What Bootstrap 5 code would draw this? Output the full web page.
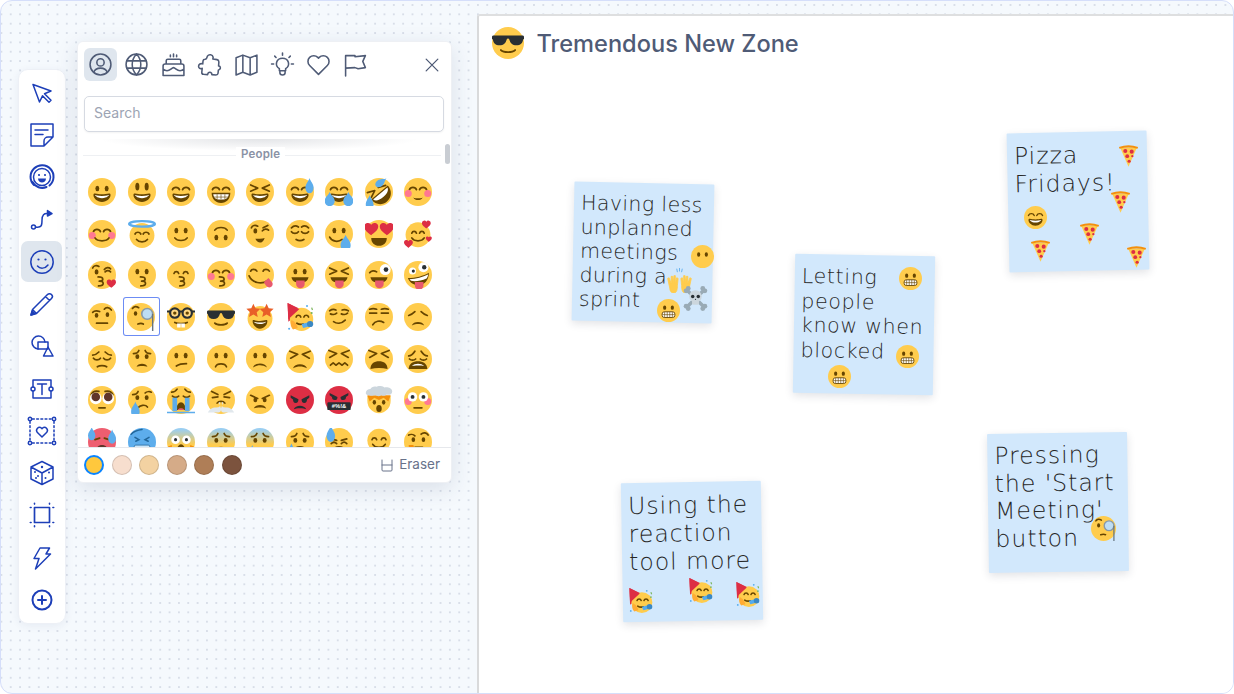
<!DOCTYPE html>
<html lang="en">
<head>
<meta charset="utf-8">
<title>Tremendous New Zone</title>
<link href="https://cdn.jsdelivr.net/npm/bootstrap@5.3.0/dist/css/bootstrap.min.css" rel="stylesheet">
<style>
body{background:#fff;font-family:Inter,"Liberation Sans",sans-serif;overflow:hidden}
.frame{height:694px;border:1px solid #d5defa;border-radius:12px;overflow:hidden;background-color:#f5f9fd;background-image:radial-gradient(circle,#d8dee8 .9px,transparent 1.3px);background-size:9.35px 9.35px;background-position:-4.3px -.7px;position:relative}
.leftcol{width:476px;flex:none;padding:68px 0 0 16.5px}
.toolrail{width:48px;height:555px;background:#fff;border:1px solid #edf0f6;border-radius:10px;box-shadow:0 2px 8px rgba(40,60,110,.07);padding:2px 0 0;gap:1.3px}
.toolbtn{height:41px;width:41px;border:0;border-radius:7px;padding:0;color:#1d3fb8;--bs-btn-color:#1d3fb8}
.toolbtn.on{background:#dfe6ee}
.toolbtn svg{width:24px;height:24px;overflow:visible}
.ico{fill:none;stroke:currentColor;stroke-width:1.5;stroke-linecap:round;stroke-linejoin:round}
.picker{position:absolute;left:76px;top:40px;width:375px;height:442px;background:#fff;border:1px solid #eef0f4;border-radius:6px;box-shadow:0 6px 22px rgba(40,55,90,.13);z-index:5}
.tabrow{padding:6px 6px 0;gap:3.4px;height:39px}
.tabbtn{width:33px;height:33px;padding:0;border:0;border-radius:6px;color:#4f5b76}
.tabbtn.on{background:#dfe6ee}
.tabbtn svg{width:25px;height:25px}
.closebtn{margin-left:auto;margin-right:-3px;color:#4f5b76}
.closebtn svg{width:20px;height:20px}
.srch{margin:15px 6px 0;width:360px;height:36px;border:1px solid #d6dae2;border-radius:5px;font-size:14px;padding:0 8px 4px 9px;box-shadow:0 1px 2px rgba(0,0,0,.05);font-family:Inter,sans-serif}
.srch::placeholder{color:#9ca4b3}
.scroller{height:315px;overflow:hidden;position:relative;flex:none}
.scroller::before{content:"";position:absolute;left:20px;right:30px;top:7px;height:12px;background:radial-gradient(ellipse at 50% 0,rgba(60,70,90,.14),transparent 70%)}
.thumb{position:absolute;left:367px;top:12px;width:5px;height:20px;border-radius:3px;background:#c9cdd3}
.grouphead{position:absolute;left:5px;width:358px;top:23px;height:1px;background:#eef0f3}
.grouplabel{position:absolute;left:158px;top:15px;padding:0 5px;background:#fff;font-size:11.5px;font-weight:600;color:#8a92a5;line-height:14px;letter-spacing:.2px}
.emogrid{position:absolute;left:4.6px;top:39.4px;display:grid;grid-template-columns:repeat(9,39.5px);grid-auto-rows:41.6px}
.cell{display:flex;align-items:center;justify-content:center}
.cell svg{width:28px;height:28px}
.cell.sel{box-shadow:inset 0 0 0 1px #6c8cf4;border-radius:3px;margin:.5px 1.5px 1.5px .5px;padding-top:1px}
.footbar{height:35px;border-top:1px solid #e6e8ec;padding:0 11px 0 6px;gap:7.5px;flex:none}
.swatch{width:20px;height:20px;border-radius:50%;border:1px solid rgba(0,0,0,.14);flex:none}
.swatch.cur{border:2px solid #0a84ff}
.sw0{background:#ffc83d}.sw1{background:#f7dece}.sw2{background:#f3d2a2}.sw3{background:#d5ab88}.sw4{background:#af7e57}.sw5{background:#7c533e}
.eraser{margin-left:auto;font-size:13.5px;color:#68728a;gap:5px;margin-top:-1px}
.eraser svg{width:14px;height:14px}
.stage{position:relative;flex:1;margin-top:13px;background:#fff;border-top:2px solid #dedfe0;border-left:2px solid #d9dadb;border-top-left-radius:3px}
.zonehead{padding:11px 0 0 13px;gap:12.5px}
.zonehead svg{width:32px;height:32px}
.zonehead h1{font-size:23.6px;font-weight:500;color:#4f5b76;margin:0;line-height:31px}
.note{position:absolute;width:140px;height:139px;margin-left:1px;background:#d2e8fc;box-shadow:0 3px 8px rgba(30,40,60,.13);border-radius:1px;padding:9px 7px;color:#262626;font-family:"DejaVu Sans","Liberation Sans",sans-serif;font-weight:200;white-space:nowrap}
.note1{left:93px;top:167px;font-size:20.5px;line-height:24px;letter-spacing:.4px;transform:rotate(1.2deg)}
.note2{left:314px;top:239px;padding-top:10px;font-size:20.5px;line-height:24.5px;letter-spacing:.7px;transform:rotate(1deg)}
.note3{left:528px;top:116px;font-size:23.5px;line-height:28px;letter-spacing:1px;transform:rotate(-1.2deg)}
.note4{left:508px;top:417px;font-size:23.5px;line-height:27.5px;letter-spacing:1px;transform:rotate(-.8deg)}
.note5{left:142px;top:466px;font-size:23.5px;line-height:28px;letter-spacing:1px;transform:rotate(-1deg)}
.pin{position:absolute;width:23px;height:23px;margin-left:1px;z-index:2}
.pin.big{width:25px;height:25px}
#p1{left:211px;top:228.5px}#p2{left:186.5px;top:251.5px}#p3{left:202.5px;top:269.5px}#p4{left:176.5px;top:282.5px}
#p5{left:419px;top:251px}#p6{left:415.5px;top:328.5px}#p7{left:348px;top:348.5px}
#p8{left:637px;top:128px}#p9{left:628.5px;top:173.5px}#p10{left:544px;top:190px}#p11{left:598px;top:205.5px}#p12{left:548.5px;top:223px}#p13{left:644.5px;top:229px}
#p14{left:148px;top:572px}#p15{left:208px;top:562px}#p16{left:255px;top:565.5px}#p17{left:611px;top:500px}
.sprite{position:absolute;width:0;height:0;overflow:hidden}
.sk{fill:none;stroke:#664500;stroke-width:2.2;stroke-linecap:round;stroke-linejoin:round}
.dk{fill:#664500}
.bl{fill:#FF7892}
.dr{fill:#5DADEC}
.wh{fill:#fff}
.rd{fill:#DD2E44}
.tn{fill:#E8596E}
</style>
</head>
<body>
<svg class="sprite" xmlns="http://www.w3.org/2000/svg">
<defs>
<linearGradient id="gb" x1="0" y1="0" x2="0" y2="1"><stop offset="0.05" stop-color="#9ACEF1"/><stop offset="0.6" stop-color="#FFCC4D"/></linearGradient>
<circle id="fc" cx="18" cy="18" r="18" fill="#FFCC4D"/>
<g id="ov" class="dk"><ellipse cx="12" cy="13.5" rx="2.5" ry="3.5"/><ellipse cx="24" cy="13.5" rx="2.5" ry="3.5"/></g>
<g id="ot"><path class="dk" d="M18 21c-3.6 0-6-.4-9-1-.7-.1-2 0-2 2 0 4 4.6 9 11 9s11-5 11-9c0-2-1.3-2.1-2-2-3 .6-5.4 1-9 1z"/><path class="wh" d="M9 22s3 1 9 1 9-1 9-1-2 4-9 4-9-4-9-4z"/></g>
<path id="hp" class="sk" d="M7 15c1.500-4 7.500-4 9 0M20 15c1.500-4 7.500-4 9 0"/>
<path id="sl" class="sk" d="M10 23c3 4.500 13 4.500 16 0"/>
<g id="bs"><circle class="bl" cx="5.500" cy="20" r="4.500"/><circle class="bl" cx="30.500" cy="20" r="4.500"/></g>
<path id="kis" class="sk" d="M16 20.500c4 0 6 1 6 3s-3 2.500-4.500 2.500c2.500 0 5 1 5 3s-3 3-6 3"/>
<path id="xe" class="sk" d="M6 9l9 4-9 4M30 9l-9 4 9 4"/>
<path id="ton" class="tn" d="M13 25h11v4.500a5.500 5.500 0 0 1-11 0z"/>
<path id="hrt" class="rd" d="M6 3.500a3.200 3.200 0 0 0-6 1.500c0 3.500 4 5.500 6 7.500 2-2 6-4 6-7.500a3.200 3.200 0 0 0-6-1.500z"/>
<path id="dp" class="dr" d="M5 0C4 3 0 5 0 9a5 5 0 0 0 10 0C10 5 6 3 5 0z"/>
<path id="sdm" class="sk" d="M11 28c2-5 12-5 14 0"/>
<path id="wor" class="sk" d="M7 11c2 0 6-1 7-4M29 11c-2 0-6-1-7-4"/>
<g id="ge"><rect x="8" y="20" width="20" height="9" rx="3.500" fill="#fff" stroke="#664500" stroke-width="1.400"/><path d="M8.500 24.500h19M12 20v9M16 20v9M20 20v9M24 20v9" fill="none" stroke="#664500" stroke-width="1"/></g>
<g id="mono"><path class="sk" d="M7 7c2-3 5-3 8-1"/><ellipse class="dk" cx="11" cy="13.500" rx="2.200" ry="3"/><path class="sk" d="M14 27c3-1 5-1 7 0"/><circle cx="26" cy="14" r="7" fill="#BDDDF4" stroke="#8899A6" stroke-width="2"/><path d="M33 14v22" stroke="#66757F" stroke-width="1.800"/></g>
<g id="part"><path class="rd" d="M2 0l19 9L3 24z"/><circle cx="20" cy="21" r="15" fill="#FFCC4D"/><path class="rd" d="M2 0l15 8L3 21z"/><path class="sk" d="M13 18c1-3 5-3 6 0M23 18c1-3 5-3 6 0" stroke-width="1.800"/><path class="sk" d="M14 26c3 2 5 2 8 1"/><path d="M20 27l12-3 2 5-12 3z" fill="#55ACEE"/><circle cx="31" cy="27" r="4" fill="#3B88C3"/><path d="M7 22c3 1 7 5 8 10l-6 2c-3-3-4-8-2-12z" fill="#FFAC33"/><circle cx="27" cy="4" r="1.300" fill="#55ACEE"/><circle cx="33" cy="13" r="1.300" fill="#77B255"/><path d="M33 6l1 3" stroke="#77B255" stroke-width="1.500"/><circle cx="4" cy="33" r="1.300" fill="#55ACEE"/></g>
<g id="piz"><path d="M5 6h26L18 35.500z" fill="#FFCC4D"/><path d="M3 4.500Q18 -.5 33 4.500l-1 3Q18 3.500 4 7.500z" fill="#F4900C"/><circle class="rd" cx="13" cy="11" r="3.200"/><circle class="rd" cx="23" cy="12" r="3.200"/><circle class="rd" cx="16" cy="19" r="3"/><circle class="rd" cx="19" cy="27" r="2.500"/><circle class="rd" cx="24" cy="19" r="1.800"/></g>
</defs>
<symbol id="a1" viewBox="0 0 36 36"><use href="#fc"/><use href="#ov"/><use href="#ot"/></symbol>
<symbol id="a2" viewBox="0 0 36 36"><use href="#fc"/><ellipse class="dk" cx="12" cy="11" rx="2.600" ry="5"/><ellipse class="dk" cx="24" cy="11" rx="2.600" ry="5"/><use href="#ot"/></symbol>
<symbol id="a3" viewBox="0 0 36 36"><use href="#fc"/><use href="#hp"/><use href="#ot"/></symbol>
<symbol id="a4" viewBox="0 0 36 36"><use href="#fc"/><use href="#hp"/><path class="dk" d="M6 19h24c0 8-5 13-12 13S6 27 6 19z"/><path class="wh" d="M8 21h20c-.5 5-4 7-10 7s-9.500-2-10-7z"/><path d="M8 24.500h20M13 21v6.500M18 21v7M23 21v6.500" stroke="#664500" stroke-width=".8" fill="none"/></symbol>
<symbol id="a5" viewBox="0 0 36 36"><use href="#fc"/><use href="#xe"/><use href="#ot"/></symbol>
<symbol id="a6" viewBox="0 0 36 36"><use href="#fc"/><use href="#hp"/><use href="#ot"/><use href="#dp" transform="translate(25 0) scale(1.050 1.400)"/></symbol>
<symbol id="a7" viewBox="0 0 36 36"><use href="#fc"/><use href="#hp"/><use href="#ot"/><use href="#dp" transform="translate(-.5 18) scale(1.300)"/><use href="#dp" transform="translate(23.500 18) scale(1.300)"/></symbol>
<symbol id="a8" viewBox="0 0 36 36"><use href="#fc"/><g transform="rotate(-40 18 18)"><use href="#xe"/><path class="dk" d="M4 19h28c0 9-6 15-14 15S4 28 4 19z"/><path class="wh" d="M6 20.500h24c-1 4-5 6-12 6s-11-2-12-6z"/></g><use href="#dp" transform="translate(25 -3) rotate(55) scale(.9 1.200)"/><use href="#dp" transform="translate(1 22) scale(1 1.350)"/></symbol>
<symbol id="a9" viewBox="0 0 36 36"><use href="#fc"/><use href="#hp"/><use href="#bs"/><path class="dk" d="M12 25c3 1.500 9 1.500 12 0-2 4.500-10 4.500-12 0z"/></symbol>
<symbol id="b1" viewBox="0 0 36 36"><use href="#fc"/><use href="#hp"/><use href="#bs"/><path class="sk" d="M9 23c3 5 15 5 18 0"/></symbol>
<symbol id="b2" viewBox="0 0 36 36"><circle cx="18" cy="20" r="16" fill="#FFCC4D"/><path class="sk" d="M9 18c1.500-3 6-3 7.500 0M19.500 18c1.500-3 6-3 7.500 0M11 25c3 4 11 4 14 0" stroke-width="1.800"/><ellipse cx="18" cy="5" rx="16.500" ry="3.500" fill="none" stroke="#5DADEC" stroke-width="3"/></symbol>
<symbol id="b3" viewBox="0 0 36 36"><use href="#fc"/><use href="#ov"/><use href="#sl"/></symbol>
<symbol id="b4" viewBox="0 0 36 36"><use href="#fc"/><g transform="rotate(180 18 18)"><use href="#ov"/><use href="#sl"/></g></symbol>
<symbol id="b5" viewBox="0 0 36 36"><use href="#fc"/><path class="sk" d="M7 10c1-3 5-4 8-2M21 14c2-3 6-3 8-1"/><path class="sk" d="M22 10l6-3"/><ellipse class="dk" cx="12" cy="14" rx="2.500" ry="3.500"/><path class="dk" d="M12 24c3 0 9 0 12-1-1 4-4 6-6 6s-5-2-6-5z"/></symbol>
<symbol id="b6" viewBox="0 0 36 36"><use href="#fc"/><path class="sk" d="M7 10c3-3 6-3 9-1M20 9c3-2 6-2 9 1M7 15c2 3 7 3 9 0M20 15c2 3 7 3 9 0M13 25c3 2 7 2 10 0"/></symbol>
<symbol id="b7" viewBox="0 0 36 36"><use href="#fc"/><use href="#ov"/><path class="sk" d="M6 22c3 6 11 7 16 3"/><use href="#dp" transform="translate(20 19) scale(1.300 1.500)"/></symbol>
<symbol id="b8" viewBox="0 0 36 36"><use href="#fc"/><path class="dk" d="M8 23h20c0 6-4 10-10 10S8 29 8 23z"/><use href="#hrt" transform="translate(-1 1) scale(1.500)"/><use href="#hrt" transform="translate(19 1) scale(1.500)"/></symbol>
<symbol id="b9" viewBox="0 0 36 36"><circle cx="18" cy="19" r="16" fill="#FFCC4D"/><path class="sk" d="M10 17c1-3 5-3 6 0M20 17c1-3 5-3 6 0M10 23c3 5 13 5 16 0"/><use href="#hrt" transform="translate(23 -1) scale(.95)"/><use href="#hrt" transform="translate(0 24) scale(.95)"/><use href="#hrt" transform="translate(28 20) scale(.65)"/></symbol>
<symbol id="c1" viewBox="0 0 36 36"><use href="#fc"/><path class="sk" d="M6 9c1-3 5-4 8-2M21 11c2-3 6-3 8-1M22 14c2-2 5-2 7 0"/><ellipse class="dk" cx="11" cy="14" rx="2.500" ry="3.500"/><use href="#kis" transform="translate(-3 0)"/><use href="#hrt" transform="translate(24 22) scale(1)"/></symbol>
<symbol id="c2" viewBox="0 0 36 36"><use href="#fc"/><use href="#ov"/><use href="#kis"/></symbol>
<symbol id="c3" viewBox="0 0 36 36"><use href="#fc"/><path class="sk" d="M9 16c1-3 5-3 6 0M21 16c1-3 5-3 6 0"/><use href="#kis"/></symbol>
<symbol id="c4" viewBox="0 0 36 36"><use href="#fc"/><use href="#hp"/><use href="#bs"/><use href="#kis"/></symbol>
<symbol id="c5" viewBox="0 0 36 36"><use href="#fc"/><path class="sk" d="M6 13c1-3 6-3 8 0M22 13c1-3 6-3 8 0M4 19c4 9 16 12 24 6"/><path class="tn" d="M23 27l6-5 5 6c1 3-1 6-4 6s-5-3-7-7z"/></symbol>
<symbol id="c6" viewBox="0 0 36 36"><use href="#fc"/><use href="#ov"/><path class="dk" d="M7 21h22c-1 5-5 7-11 7s-10-2-11-7z"/><use href="#ton"/></symbol>
<symbol id="c7" viewBox="0 0 36 36"><use href="#fc"/><use href="#xe"/><path class="dk" d="M7 21h22c-1 5-5 7-11 7s-10-2-11-7z"/><use href="#ton"/></symbol>
<symbol id="c8" viewBox="0 0 36 36"><use href="#fc"/><path class="sk" d="M6 15c2-3 6-3 9-1"/><circle class="wh" cx="26" cy="11" r="7"/><circle cx="27" cy="11" r="3" fill="#292F33"/><path class="dk" d="M7 21h22c-1 5-5 7-11 7s-10-2-11-7z"/><use href="#ton"/></symbol>
<symbol id="c9" viewBox="0 0 36 36"><use href="#fc"/><circle class="wh" cx="11" cy="13" r="4.500"/><circle cx="12" cy="13" r="2" fill="#292F33"/><circle class="wh" cx="25" cy="8" r="6.500"/><circle cx="26" cy="8" r="2.800" fill="#292F33"/><path class="dk" d="M5 22c10 0 20-3 27-7 0 10-6 16-14 16-7 0-11-4-13-9z"/><path class="wh" d="M7 23.500c9 0 17-3 24-6-.5 3-1 4-2 5-7 3-14 4-20 3z"/><use href="#ton" transform="translate(1 2)"/></symbol>
<symbol id="d1" viewBox="0 0 36 36"><use href="#fc"/><path class="sk" d="M6 12c2-2 6-2 9-1M21 8c2-3 6-3 9 1"/><ellipse class="dk" cx="11" cy="16" rx="2.300" ry="3"/><ellipse class="dk" cx="25" cy="15" rx="2.300" ry="3"/><path class="sk" d="M11 26h14"/></symbol>
<symbol id="d2" viewBox="0 0 36 36"><use href="#fc"/><use href="#mono"/></symbol>
<symbol id="d3" viewBox="0 0 36 36"><use href="#fc"/><path d="M0 11h4M32 11h4M15 11h6" stroke="#292F33" stroke-width="2.500"/><circle cx="10" cy="13" r="6" fill="#FFD983" stroke="#292F33" stroke-width="2.800"/><circle cx="26" cy="13" r="6" fill="#FFD983" stroke="#292F33" stroke-width="2.800"/><circle class="dk" cx="10" cy="13" r="2.200"/><circle class="dk" cx="26" cy="13" r="2.200"/><path class="sk" d="M10 25c4 2 12 2 16 0"/><path class="wh" d="M13 26.500h10v5h-4.500v-4h-1v4H13z"/></symbol>
<symbol id="d4" viewBox="0 0 36 36"><use href="#fc"/><path fill="#292F33" d="M0 11c0-1 1-1.500 2-1.500h32c1 0 2 .5 2 1.500v2.500l-1 .5c-.5 4-3 6.500-7.500 6.500s-7-2.500-8-6.500c-.5-1.500-2.500-1.500-3 0-1 4-3.500 6.500-8 6.500S1.500 18 1 14l-1-.5z"/><path class="sk" d="M10 26c3 3 13 3 16 0" stroke-width="2.400"/></symbol>
<symbol id="d5" viewBox="0 0 36 36"><circle cx="18" cy="20" r="16" fill="#FFCC4D"/><path class="dk" d="M18 23c-3.500 0-5.500-.5-8-1-.7-.1-1.500 0-1.500 1.500C8.500 28 13 33 18 33s9.500-5 9.500-9.500c0-1.500-.8-1.600-1.500-1.500-2.500.5-4.500 1-8 1z"/><path class="wh" d="M10 24s3 1 8 1 8-1 8-1-2 3-8 3-8-3-8-3z"/><path fill="#E95F28" d="M9.500 1l2.700 5.800 6.300.7-4.700 4.300 1.300 6.200-5.600-3.100L3.900 18l1.300-6.200L.5 7.500l6.300-.7zM26.500 1l2.700 5.800 6.300.7-4.700 4.300 1.300 6.200-5.600-3.100L20.900 18l1.300-6.200-4.700-4.300 6.300-.7z"/></symbol>
<symbol id="d6" viewBox="0 0 36 36"><use href="#part"/></symbol>
<symbol id="d7" viewBox="0 0 36 36"><use href="#fc"/><path class="sk" d="M7 14c2 1 6 1 8-1M21 14c2 1 6 1 8-1M6 10c3-2 6-2 8-1M22 9c3-1 6 0 8 1M11 24c4 3 10 3 15-2"/></symbol>
<symbol id="d8" viewBox="0 0 36 36"><use href="#fc"/><path class="sk" d="M6 8c3-1 6-1 9 0M21 8c3-1 6-1 9 0M6 13h9M21 13h9"/><path class="sk" d="M10 28c3-5 9-6 14-3"/></symbol>
<symbol id="d9" viewBox="0 0 36 36"><use href="#fc"/><path class="sk" d="M6 16c3-1 6-3 8-5M30 16c-3-1-6-3-8-5"/><path class="dk" d="M10 29c2-6 14-6 16 0-3-2-6-2-8-2s-5 0-8 2z"/></symbol>
<symbol id="e1" viewBox="0 0 36 36"><use href="#fc"/><path class="sk" d="M6 13c3 0 6-2 8-4M30 13c-3 0-6-2-8-4M7 17c2 3 7 3 9 0M20 17c2 3 7 3 9 0M12 28c3-2 9-2 12 0"/></symbol>
<symbol id="e2" viewBox="0 0 36 36"><use href="#fc"/><use href="#wor"/><ellipse class="dk" cx="12" cy="15" rx="2.500" ry="3"/><ellipse class="dk" cx="24" cy="15" rx="2.500" ry="3"/><path class="dk" d="M11 28c1.500-5 12.500-5 14 0-3-1.500-11-1.500-14 0z"/></symbol>
<symbol id="e3" viewBox="0 0 36 36"><use href="#fc"/><use href="#ov"/><path class="sk" d="M12 27c3-2 8-3 13-3"/></symbol>
<symbol id="e4" viewBox="0 0 36 36"><use href="#fc"/><use href="#ov"/><use href="#sdm"/></symbol>
<symbol id="e5" viewBox="0 0 36 36"><use href="#fc"/><use href="#ov"/><path class="dk" d="M9 29c2-7 16-7 18 0-3-2-6-3-9-3s-6 1-9 3z"/></symbol>
<symbol id="e6" viewBox="0 0 36 36"><use href="#fc"/><path class="sk" d="M5 8l10 4-9 5M31 8l-10 4 9 5"/><path class="dk" d="M9 30c2-7 16-7 18 0-3-2-6-2.500-9-2.500S12 28 9 30z"/></symbol>
<symbol id="e7" viewBox="0 0 36 36"><use href="#fc"/><path class="sk" d="M5 7l10 4-9 5M31 7l-10 4 9 5M7 26l3.500-3 3.500 3 4-3 4 3 3.500-3 3.500 3"/></symbol>
<symbol id="e8" viewBox="0 0 36 36"><use href="#fc"/><path class="sk" d="M5 7l10 4-9 5M31 7l-10 4 9 5"/><path class="dk" d="M7 31c0-7 5-10 11-10s11 3 11 10c-7-2-15-2-22 0z"/></symbol>
<symbol id="e9" viewBox="0 0 36 36"><use href="#fc"/><path class="sk" d="M6 14c3 0 6-3 8-6M30 14c-3 0-6-3-8-6M7 18c2 2 6 2 8 0M21 18c2 2 6 2 8 0"/><path class="dk" d="M6 31c0-7 6-10 12-10s12 3 12 10H6z"/><path class="wh" d="M10 27c2-2 5-3 8-3s6 1 8 3c-3-1-13-1-16 0z"/></symbol>
<symbol id="f1" viewBox="0 0 36 36"><use href="#fc"/><path class="sk" d="M4 11c2-4 6-5 10-4M32 11c-2-4-6-5-10-4"/><circle class="wh" cx="10" cy="16" r="7.500"/><circle class="wh" cx="26" cy="16" r="7.500"/><circle cx="10" cy="14" r="5.500" fill="#60352A"/><circle cx="26" cy="14" r="5.500" fill="#60352A"/><path class="sk" d="M14 28h8"/></symbol>
<symbol id="f2" viewBox="0 0 36 36"><use href="#fc"/><path class="sk" d="M6 11c2 0 6-1 7-4M30 8c-2-1-6-1-8 1"/><ellipse class="dk" cx="12" cy="15" rx="2.500" ry="3"/><ellipse class="dk" cx="24" cy="15" rx="2.500" ry="3"/><path class="sk" d="M13 28c2-3 9-5 12-1"/><use href="#dp" transform="translate(4 20) scale(1.100 1.450)"/></symbol>
<symbol id="f3" viewBox="0 0 36 36"><use href="#fc"/><path class="sk" d="M6 8c2 0 5-1 7-4M30 8c-2 0-5-1-7-4M7 13c2 2 6 2 8 0M21 13c2 2 6 2 8 0"/><path class="dk" d="M12 31c0-6 3-10 6-10s6 4 6 10z"/><path class="tn" d="M14 31c0-3 8-3 8 0z"/><path class="dr" d="M7 15h6v17H7zM23 15h6v17h-6zM0 33h36v2H0z"/></symbol>
<symbol id="f4" viewBox="0 0 36 36"><use href="#fc"/><path class="sk" d="M6 7l8 4M30 7l-8 4M7 15l7-1M29 15l-7-1"/><path class="sk" d="M13 22c2-3 8-3 10 0"/><path fill="#E1E8ED" d="M15 21h2l-1 6c-2 1-6 0-8 1-3 1-5 3-7 6h14c3 0 3-3 3-5zM21 21h-2l1 6c2 1 6 0 8 1 3 1 5 3 7 6H21c-3 0-3-3-3-5z"/></symbol>
<symbol id="f5" viewBox="0 0 36 36"><use href="#fc"/><path class="sk" d="M6 12l9 4M30 12l-9 4"/><ellipse class="dk" cx="12" cy="18" rx="2.500" ry="3"/><ellipse class="dk" cx="24" cy="18" rx="2.500" ry="3"/><path class="dk" d="M10 29c2-6 14-6 16 0-3-2-13-2-16 0z"/></symbol>
<symbol id="f6" viewBox="0 0 36 36"><circle class="rd" cx="18" cy="18" r="18"/><path fill="#292F33" d="M6 12l10 5c0 3-1 5-3.500 5S9 20 9 17.500L6 15zM30 12l-10 5c0 3 1 5 3.500 5S27 20 27 17.500L30 15z"/><path fill="#292F33" d="M10 30c2-6 14-6 16 0-3-2-13-2-16 0z"/></symbol>
<symbol id="f8" viewBox="0 0 36 36"><path d="M3 13h30v6a15 16 0 0 1-30 0z" fill="#FFCC4D"/><path d="M3 12h30l-3 8-6-5-6 3-6-3-6 5z" fill="#F4900C"/><ellipse class="dk" cx="12" cy="21" rx="2.200" ry="3"/><ellipse class="dk" cx="24" cy="21" rx="2.200" ry="3"/><ellipse class="dk" cx="18" cy="29" rx="3.500" ry="4.500"/><path fill="#CCD6DD" d="M1 9c0-3 3-5 6-5 1-3 5-4 8-3 3-2 8-1 10 1 4-1 10 1 10 5s-4 5-7 4c-2 2-5 2-7 1-3 2-6 1-8 0-3 1-12 1-12-3z"/></symbol>
<symbol id="f9" viewBox="0 0 36 36"><use href="#fc"/><use href="#bs"/><circle class="wh" cx="11" cy="14" r="6"/><circle class="wh" cx="25" cy="14" r="6"/><circle cx="11" cy="14" r="2.500" fill="#292F33"/><circle cx="25" cy="14" r="2.500" fill="#292F33"/><path class="sk" d="M13 28h10"/></symbol>
<symbol id="g1" viewBox="0 0 36 36"><circle cx="18" cy="18" r="18" fill="#EE5E70"/><path class="sk" d="M9 15l6-2M27 15l-6-2" stroke="#60352A"/><path fill="#60352A" d="M10 30c0-5 4-8 8-8s8 3 8 8z"/><use href="#dp" transform="translate(0 -1) scale(.95 1.200)"/><use href="#dp" transform="translate(26 2) scale(1 1.300)"/></symbol>
<symbol id="g2" viewBox="0 0 36 36"><circle class="dr" cx="18" cy="18" r="18"/><path d="M4 8c3-3 6-5 14-6M9 12l5 3-4 2M27 12l-5 3 4 2" fill="none" stroke="#226699" stroke-width="2" stroke-linecap="round"/><rect x="8" y="22" width="20" height="8" rx="2" fill="#CCE7FB" stroke="#226699"/></symbol>
<symbol id="g3" viewBox="0 0 36 36"><circle cx="18" cy="18" r="18" fill="url(#gb)"/><circle class="wh" cx="11" cy="15" r="5.500"/><circle class="wh" cx="25" cy="15" r="5.500"/><circle cx="11" cy="15" r="2" fill="#292F33"/><circle cx="25" cy="15" r="2" fill="#292F33"/><ellipse class="dk" cx="18" cy="28" rx="5" ry="7"/><path d="M1 24l5-2 2 12-6-3zM35 24l-5-2-2 12 6-3z" fill="#F4900C"/></symbol>
<symbol id="g4" viewBox="0 0 36 36"><circle cx="18" cy="18" r="18" fill="url(#gb)"/><use href="#wor"/><ellipse class="dk" cx="12" cy="16" rx="2.500" ry="3"/><ellipse class="dk" cx="24" cy="16" rx="2.500" ry="3"/><ellipse class="dk" cx="18" cy="28" rx="6" ry="4"/></symbol>
<symbol id="g5" viewBox="0 0 36 36"><circle cx="18" cy="18" r="18" fill="url(#gb)"/><use href="#wor"/><ellipse class="dk" cx="12" cy="16" rx="2.500" ry="3"/><ellipse class="dk" cx="24" cy="16" rx="2.500" ry="3"/><path class="dk" d="M11 30c1-7 13-7 14 0z"/><use href="#dp" transform="translate(4 22) scale(.8 1.100)"/></symbol>
<symbol id="g6" viewBox="0 0 36 36"><use href="#fc"/><use href="#wor"/><ellipse class="dk" cx="12" cy="16" rx="2.500" ry="3"/><ellipse class="dk" cx="24" cy="16" rx="2.500" ry="3"/><use href="#sdm"/><use href="#dp" transform="translate(3 20) scale(.8 1.100)"/></symbol>
<symbol id="g7" viewBox="0 0 36 36"><use href="#fc"/><path class="sk" d="M8 14l7 2M28 14l-7 2M8 20c2-2 5-2 7 0M21 20c2-2 5-2 7 0"/><use href="#sdm"/><use href="#dp" transform="translate(2 -3) scale(1.100 1.500)"/></symbol>
<symbol id="g8" viewBox="0 0 36 36"><circle cx="18" cy="16" r="15" fill="#FFCC4D"/><path class="sk" d="M9 15c1-3 5-3 6 0M21 15c1-3 5-3 6 0M10 21c3 5 13 5 16 0"/><path fill="#F4900C" d="M2 26l4 2 3-3 3 3 1 5-8 3zM34 26l-4 2-3-3-3 3-1 5 8 3z"/></symbol>
<symbol id="g9" viewBox="0 0 36 36"><use href="#fc"/><path class="sk" d="M6 9c2-1 6-1 8 1M22 8c3-3 7-2 9 1"/><ellipse class="dk" cx="12" cy="15" rx="2.300" ry="3"/><ellipse class="dk" cx="25" cy="15" rx="2.300" ry="3"/><path class="sk" d="M14 25h10"/><path d="M6 22h6l2 6 5 1v4l-8 3-4-2z" fill="#F4900C"/></symbol>
<symbol id="h1" viewBox="0 0 36 36"><use href="#fc"/><ellipse class="dk" cx="12" cy="15" rx="2.500" ry="3.500"/><ellipse class="dk" cx="24" cy="15" rx="2.500" ry="3.500"/></symbol>
<symbol id="h2" viewBox="0 0 36 36"><path d="M3 14l3 8 0-10 2 0 1 9 1-10 2 0 0 11 2-8 2 1-1 10c0 6-1 11-5 11s-6-3-6-7L1 15z" fill="#FFCC4D" stroke="#FFCC4D" stroke-width="1.200"/><path d="M33 14l-3 8 0-10-2 0-1 9-1-10-2 0 0 11-2-8-2 1 1 10c0 6 1 11 5 11s6-3 6-7l3-14z" fill="#FFCC4D" stroke="#FFCC4D" stroke-width="1.200"/><path d="M14 1l1 5M18 0v5M22 1l-1 5" stroke="#5DADEC" stroke-width="1.300" fill="none"/></symbol>
<symbol id="h3" viewBox="0 0 36 36"><path d="M6 6L30 30M30 6L6 30" stroke="#99AAB5" stroke-width="5" stroke-linecap="round"/><circle cx="4.500" cy="7" r="3.500" fill="#99AAB5"/><circle cx="7.500" cy="3.500" r="3.500" fill="#99AAB5"/><circle cx="31.500" cy="7" r="3.500" fill="#99AAB5"/><circle cx="28.500" cy="3.500" r="3.500" fill="#99AAB5"/><circle cx="4.500" cy="29" r="3.500" fill="#99AAB5"/><circle cx="7.500" cy="32.500" r="3.500" fill="#99AAB5"/><circle cx="31.500" cy="29" r="3.500" fill="#99AAB5"/><circle cx="28.500" cy="32.500" r="3.500" fill="#99AAB5"/><circle cx="18" cy="15" r="9" fill="#CCD6DD"/><rect x="13" y="20" width="10" height="7" rx="2" fill="#CCD6DD"/><circle cx="14" cy="15" r="2.500" fill="#292F33"/><circle cx="22" cy="15" r="2.500" fill="#292F33"/><path d="M18 18l-1 2h2z" fill="#292F33"/></symbol>
<symbol id="h4" viewBox="0 0 36 36"><use href="#fc"/><use href="#ov"/><use href="#ge"/></symbol>
<symbol id="h5" viewBox="0 0 36 36"><use href="#piz"/></symbol>
</svg>

<main class="frame d-flex">
  <div class="leftcol">
    <nav class="toolrail d-flex flex-column align-items-center" aria-label="Tools">
      <button class="btn toolbtn d-flex align-items-center justify-content-center" aria-label="Select"><svg viewBox="0 0 24 24" class="ico"><path d="M3 3.500L21 10l-6.500 2.800L21 19.300 19 21.300l-6.500-6.500L9.500 21z"/></svg></button>
      <button class="btn toolbtn d-flex align-items-center justify-content-center" aria-label="Note"><svg viewBox="0 0 24 24" class="ico"><path d="M1 1h22v13l-9 9H1zM14 23v-5a4 4 0 0 1 4-4h5M5 7h13M5 11.500h8"/></svg></button>
      <button class="btn toolbtn d-flex align-items-center justify-content-center" aria-label="Reaction"><svg viewBox="0 0 24 24" class="ico"><circle cx="12" cy="12" r="8.500"/><path d="M4 20a11.500 11.500 0 1 1 15.500.5M2.500 17a11 11 0 0 0 14 5" stroke-width="2"/><circle cx="9" cy="10" r="1.100" fill="currentColor" stroke="none"/><circle cx="15" cy="10" r="1.100" fill="currentColor" stroke="none"/><path d="M8 13.500h8c0 2.500-2 4-4 4s-4-1.500-4-4z" fill="currentColor" stroke="none"/></svg></button>
      <button class="btn toolbtn d-flex align-items-center justify-content-center" aria-label="Connector"><svg viewBox="0 0 24 24" class="ico"><circle cx="3.500" cy="20" r="2"/><path d="M5.500 20c6.500 1 6.500-2 6.500-7s2-7 6-6.500"/><path d="M17.500 3.500L22 6.500 17.500 9z" fill="currentColor"/></svg></button>
      <button class="btn toolbtn on d-flex align-items-center justify-content-center" aria-label="Emoji"><svg viewBox="0 0 24 24" class="ico"><circle cx="12" cy="12" r="11.200"/><circle cx="8.500" cy="9.500" r="1.100" fill="currentColor" stroke="none"/><circle cx="15.500" cy="9.500" r="1.100" fill="currentColor" stroke="none"/><path d="M7.500 16c2.500 3 7.500 3 10.500-1"/></svg></button>
      <button class="btn toolbtn d-flex align-items-center justify-content-center" aria-label="Pencil"><svg viewBox="0 0 24 24" class="ico"><path d="M1 23l1.500-5.500L17.500 2.500a2.800 2.800 0 0 1 4 4L6.500 21.500zM2.500 17.500l4 4M15.500 4.500l4 4"/><path d="M1 23l1.200-4 2.800 2.800z" fill="currentColor"/></svg></button>
      <button class="btn toolbtn d-flex align-items-center justify-content-center" aria-label="Shapes"><svg viewBox="0 0 24 24" class="ico"><path d="M8 15a6.500 6.500 0 1 1 7-7"/><path d="M8 8h10v7H8z"/><path d="M18 13l5 9h-9.500z"/></svg></button>
      <button class="btn toolbtn d-flex align-items-center justify-content-center" aria-label="Text"><svg viewBox="0 0 24 24" class="ico"><path d="M3 10V3h18v7M3 14v7h18v-7M7.500 7h9M12 7v10.500"/><circle cx="3" cy="12" r="2"/><circle cx="21" cy="12" r="2"/></svg></button>
      <button class="btn toolbtn d-flex align-items-center justify-content-center" aria-label="Stamp"><svg viewBox="0 0 24 24" class="ico"><path d="M2.500 0h19M2.500 24h19M0 2.500v19M24 2.500v19" stroke-dasharray="1.800 2.400"/><circle cx="0" cy="0" r="1.700"/><circle cx="24" cy="0" r="1.700"/><circle cx="0" cy="24" r="1.700"/><circle cx="24" cy="24" r="1.700"/><path d="M12 18l-4.800-4.800a3 3 0 0 1 4.200-4.200l.6.600.6-.6a3 3 0 0 1 4.200 4.200z"/></svg></button>
      <button class="btn toolbtn d-flex align-items-center justify-content-center" aria-label="Dice"><svg viewBox="0 0 24 24" class="ico"><path d="M12 .5l11 5.500V18L12 23.500 1 18V6zM1 6l11 6 11-6M12 12v11.500"/><g fill="currentColor" stroke="none"><circle cx="12" cy="6" r="1.200"/><circle cx="5" cy="11" r="1"/><circle cx="8" cy="15" r="1"/><circle cx="6" cy="17" r="1"/><circle cx="19" cy="11.500" r="1"/><circle cx="15.500" cy="17" r="1"/></g></svg></button>
      <button class="btn toolbtn d-flex align-items-center justify-content-center" aria-label="Frame"><svg viewBox="0 0 24 24" class="ico"><rect x="4.500" y="4.500" width="15" height="15" stroke-width="1.700"/><path d="M.3 4.500h.8M22.900 4.500h.8M.3 19.500h.8M22.900 19.500h.8M4.500 .3v.8M19.500 .3v.8M4.500 22.900v.8M19.500 22.900v.8" stroke-width="1.600"/></svg></button>
      <button class="btn toolbtn d-flex align-items-center justify-content-center" aria-label="Actions"><svg viewBox="0 0 24 24" class="ico"><path d="M10 2h9.500l-3.500 6h4.500L5.500 23l3.500-10.500H4z"/></svg></button>
      <button class="btn toolbtn d-flex align-items-center justify-content-center" aria-label="More"><svg viewBox="0 0 24 24" class="ico"><circle cx="12" cy="12" r="9.500" stroke-width="2"/><path d="M12 8v8M8 12h8" stroke-width="2"/></svg></button>
    </nav>
  </div>

  <section class="picker d-flex flex-column" aria-label="Emoji picker">
    <div class="tabrow d-flex">
      <button class="btn tabbtn on d-flex align-items-center justify-content-center" aria-label="People"><svg viewBox="0 0 24 24" class="ico"><circle cx="12" cy="12" r="10"/><circle cx="12" cy="10" r="3.500"/><path d="M5.500 19.500c1-3 3.500-4 6.500-4s5.500 1 6.500 4"/></svg></button>
      <button class="btn tabbtn d-flex align-items-center justify-content-center" aria-label="Nature"><svg viewBox="0 0 24 24" class="ico"><circle cx="12" cy="12" r="10"/><path d="M2.800 8.500h18.400M2.800 15.500h18.400M12 2c-5.500 6-5.500 14 0 20M12 2c5.500 6 5.500 14 0 20"/></svg></button>
      <button class="btn tabbtn d-flex align-items-center justify-content-center" aria-label="Food"><svg viewBox="0 0 24 24" class="ico"><path d="M2 22.500h20v-9a2 2 0 0 0-2-2H4a2 2 0 0 0-2 2zM2 16.500c2.500 2 5 2 7.500 0s2.500-2 5 0 5 2 7.500 0M5 11.500v-3a1.500 1.500 0 0 1 1.500-1.500h11A1.500 1.500 0 0 1 19 8.500v3M9 4.500V3M12 4.500V2M15 4.500V3"/></svg></button>
      <button class="btn tabbtn d-flex align-items-center justify-content-center" aria-label="Activity"><svg viewBox="0 0 24 24" class="ico"><path d="M9 6.500l1-2.500a3 3 0 0 1 5.500 1l-.3 1.800 4 .5c1.300.2 1.800 1.200 1.800 2.200l-.3 4c1.800-.3 2.300 2 1 3.200l-1.200.7-.3 3c-.1 1-1 1.600-2 1.600l-4-.3c.5-2-2-3-3.500-1.500l-.5 1.500-4-.3c-1-.1-1.700-1-1.600-2l.4-3.700c-2 .8-3.500-.2-3.500-2 0-2 2-3 4-2.300l.3-2.900c.1-1 1-1.600 2-1.600z"/></svg></button>
      <button class="btn tabbtn d-flex align-items-center justify-content-center" aria-label="Travel"><svg viewBox="0 0 24 24" class="ico"><path d="M2 5.500l6.500-2.500 7 2.500L22 3v16.500L15.500 22l-7-2.500L2 22zM8.500 3v16.500M15.500 5.500V22"/></svg></button>
      <button class="btn tabbtn d-flex align-items-center justify-content-center" aria-label="Objects"><svg viewBox="0 0 24 24" class="ico"><path d="M1.500 11.500h2M20.500 11.500h2M12 1v2M4.500 4l1.300 1.300M19.500 4l-1.300 1.300"/><path d="M9 18v-2c-5-3-3-10 3-10s8 7 3 10v2zM9.500 18.500v1.500c0 1 1 2 2.500 2s2.500-1 2.500-2v-1.500"/></svg></button>
      <button class="btn tabbtn d-flex align-items-center justify-content-center" aria-label="Symbols"><svg viewBox="0 0 24 24" class="ico"><path d="M12 21.500L3.500 13a5.500 5.500 0 0 1 7.800-7.800l.7.700.7-.7a5.500 5.500 0 0 1 7.800 7.800z"/></svg></button>
      <button class="btn tabbtn d-flex align-items-center justify-content-center" aria-label="Flags"><svg viewBox="0 0 24 24" class="ico"><path d="M2.500 23V3.500h9v1l10-1-2.500 5.500 2.500 6-7 1-3-1-9 .5"/></svg></button>
      <button class="btn tabbtn closebtn d-flex align-items-center justify-content-center" aria-label="Close"><svg viewBox="0 0 24 24" class="ico"><path d="M5 5l14 14M19 5L5 19"/></svg></button>
    </div>
    <input class="form-control srch" type="text" placeholder="Search" aria-label="Search">
    <div class="scroller">
      <div class="grouphead"></div>
      <div class="grouplabel">People</div>
      <div class="thumb"></div>
      <div class="emogrid">
        <div class="cell"><svg><use href="#a1"/></svg></div><div class="cell"><svg><use href="#a2"/></svg></div><div class="cell"><svg><use href="#a3"/></svg></div><div class="cell"><svg><use href="#a4"/></svg></div><div class="cell"><svg><use href="#a5"/></svg></div><div class="cell"><svg><use href="#a6"/></svg></div><div class="cell"><svg><use href="#a7"/></svg></div><div class="cell"><svg><use href="#a8"/></svg></div><div class="cell"><svg><use href="#a9"/></svg></div>
        <div class="cell"><svg><use href="#b1"/></svg></div><div class="cell"><svg><use href="#b2"/></svg></div><div class="cell"><svg><use href="#b3"/></svg></div><div class="cell"><svg><use href="#b4"/></svg></div><div class="cell"><svg><use href="#b5"/></svg></div><div class="cell"><svg><use href="#b6"/></svg></div><div class="cell"><svg><use href="#b7"/></svg></div><div class="cell"><svg><use href="#b8"/></svg></div><div class="cell"><svg><use href="#b9"/></svg></div>
        <div class="cell"><svg><use href="#c1"/></svg></div><div class="cell"><svg><use href="#c2"/></svg></div><div class="cell"><svg><use href="#c3"/></svg></div><div class="cell"><svg><use href="#c4"/></svg></div><div class="cell"><svg><use href="#c5"/></svg></div><div class="cell"><svg><use href="#c6"/></svg></div><div class="cell"><svg><use href="#c7"/></svg></div><div class="cell"><svg><use href="#c8"/></svg></div><div class="cell"><svg><use href="#c9"/></svg></div>
        <div class="cell"><svg><use href="#d1"/></svg></div><div class="cell sel"><svg><use href="#d2"/></svg></div><div class="cell"><svg><use href="#d3"/></svg></div><div class="cell"><svg><use href="#d4"/></svg></div><div class="cell"><svg><use href="#d5"/></svg></div><div class="cell"><svg><use href="#d6"/></svg></div><div class="cell"><svg><use href="#d7"/></svg></div><div class="cell"><svg><use href="#d8"/></svg></div><div class="cell"><svg><use href="#d9"/></svg></div>
        <div class="cell"><svg><use href="#e1"/></svg></div><div class="cell"><svg><use href="#e2"/></svg></div><div class="cell"><svg><use href="#e3"/></svg></div><div class="cell"><svg><use href="#e4"/></svg></div><div class="cell"><svg><use href="#e5"/></svg></div><div class="cell"><svg><use href="#e6"/></svg></div><div class="cell"><svg><use href="#e7"/></svg></div><div class="cell"><svg><use href="#e8"/></svg></div><div class="cell"><svg><use href="#e9"/></svg></div>
        <div class="cell"><svg><use href="#f1"/></svg></div><div class="cell"><svg><use href="#f2"/></svg></div><div class="cell"><svg><use href="#f3"/></svg></div><div class="cell"><svg><use href="#f4"/></svg></div><div class="cell"><svg><use href="#f5"/></svg></div><div class="cell"><svg><use href="#f6"/></svg></div><div class="cell"><svg viewBox="0 0 36 36"><circle class="rd" cx="18" cy="18" r="18"/><path fill="#292F33" d="M6 9l10 5c0 3-1 4-3.500 4S9 16 9 14L6 12zM30 9l-10 5c0 3 1 4 3.500 4S27 16 27 14L30 12z"/><rect x="3" y="21" width="30" height="10" rx="1.500" fill="#292F33"/><text x="18" y="28.500" text-anchor="middle" font-family="Liberation Sans,sans-serif" font-weight="700" font-size="7.500" fill="#fff">#%!&amp;</text></svg></div><div class="cell"><svg><use href="#f8"/></svg></div><div class="cell"><svg><use href="#f9"/></svg></div>
        <div class="cell"><svg><use href="#g1"/></svg></div><div class="cell"><svg><use href="#g2"/></svg></div><div class="cell"><svg><use href="#g3"/></svg></div><div class="cell"><svg><use href="#g4"/></svg></div><div class="cell"><svg><use href="#g5"/></svg></div><div class="cell"><svg><use href="#g6"/></svg></div><div class="cell"><svg><use href="#g7"/></svg></div><div class="cell"><svg><use href="#g8"/></svg></div><div class="cell"><svg><use href="#g9"/></svg></div>
      </div>
    </div>
    <div class="footbar d-flex align-items-center">
      <span class="swatch cur sw0"></span><span class="swatch sw1"></span><span class="swatch sw2"></span><span class="swatch sw3"></span><span class="swatch sw4"></span><span class="swatch sw5"></span>
      <span class="eraser d-flex align-items-center"><svg viewBox="0 0 14 14" class="ico"><path d="M2 2v10a1 1 0 0 0 1 1h8a1 1 0 0 0 1-1V2M2 7h10" stroke-width="1"/></svg>Eraser</span>
    </div>
  </section>

  <section class="stage">
    <header class="zonehead d-flex align-items-center">
      <svg><use href="#d4"/></svg>
      <h1>Tremendous New Zone</h1>
    </header>
    <div class="note note1">Having less<br>unplanned<br>meetings<br>during a<br>sprint</div>
    <div class="note note2">Letting<br>people<br>know when<br>blocked</div>
    <div class="note note3">Pizza<br>Fridays!</div>
    <div class="note note4">Pressing<br>the 'Start<br>Meeting'<br>button</div>
    <div class="note note5">Using the<br>reaction<br>tool more</div>
    <svg class="pin" id="p1"><use href="#h1"/></svg>
    <svg class="pin big" id="p2"><use href="#h2"/></svg>
    <svg class="pin big" id="p3"><use href="#h3"/></svg>
    <svg class="pin" id="p4"><use href="#h4"/></svg>
    <svg class="pin" id="p5"><use href="#h4"/></svg>
    <svg class="pin" id="p6"><use href="#h4"/></svg>
    <svg class="pin" id="p7"><use href="#h4"/></svg>
    <svg class="pin" id="p8"><use href="#h5"/></svg>
    <svg class="pin" id="p9"><use href="#h5"/></svg>
    <svg class="pin" id="p10"><use href="#a3"/></svg>
    <svg class="pin" id="p11"><use href="#h5"/></svg>
    <svg class="pin" id="p12"><use href="#h5"/></svg>
    <svg class="pin" id="p13"><use href="#h5"/></svg>
    <svg class="pin big" id="p14"><use href="#d6"/></svg>
    <svg class="pin big" id="p15"><use href="#d6"/></svg>
    <svg class="pin big" id="p16"><use href="#d6"/></svg>
    <svg class="pin big" id="p17"><use href="#d2"/></svg>
  </section>
</main>
<script src="https://cdn.jsdelivr.net/npm/bootstrap@5.3.0/dist/js/bootstrap.bundle.min.js"></script>
</body>
</html>
